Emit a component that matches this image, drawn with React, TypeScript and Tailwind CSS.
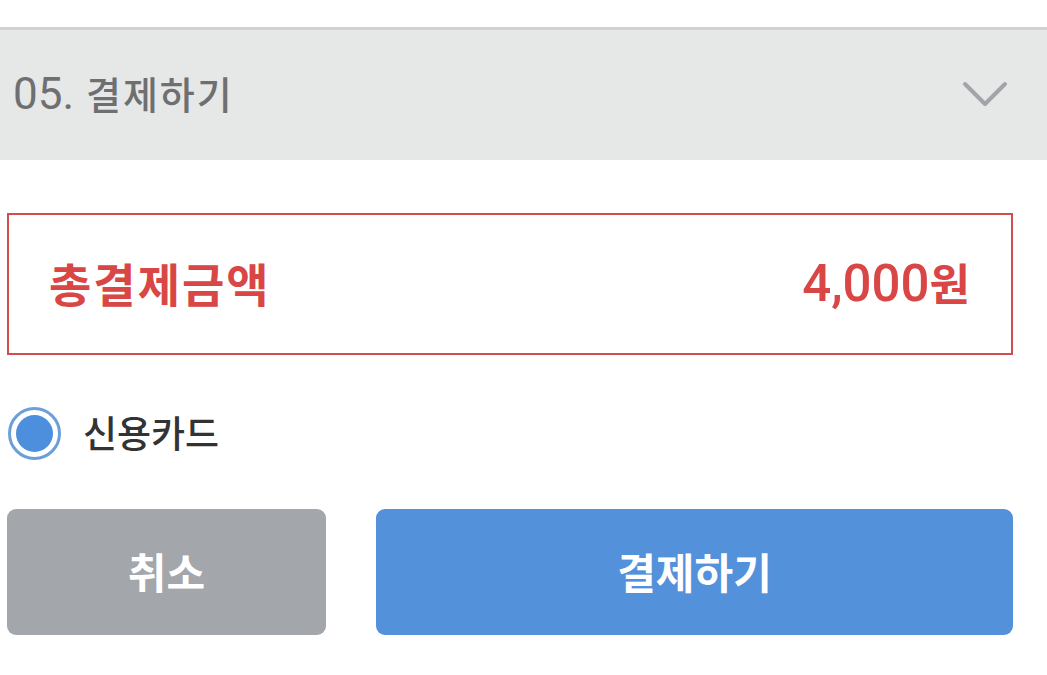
const FONT = { fontFamily: '"Noto Sans", "Noto Sans CJK KR", sans-serif' };
const DIGITS = { fontFamily: 'Roboto, "Noto Sans CJK KR", sans-serif' };

function Chevron() {
  return (
    <svg width="46" height="30" viewBox="0 0 46 30" fill="none" aria-hidden>
      <polyline
        points="3,4 23,24 43,4"
        stroke="#a2a5a8"
        strokeWidth="4"
        strokeLinecap="round"
        strokeLinejoin="round"
      />
    </svg>
  );
}

export default function App() {
  return (
    <div className="min-h-[675px] w-[1047px] bg-white" style={FONT}>
      <div className="h-[27px]" />
      {/* section header */}
      <div className="flex h-[133px] items-center justify-between border-t-[3px] border-[#d0d1d1] bg-[#e6e7e7] pl-[13px] pr-[39px]">
        <span className="pb-[3px] text-[38px] font-medium tracking-[2px] text-[#6e6f71]">
          <span className="text-[44px] font-normal tracking-normal" style={DIGITS}>
            05.
          </span>{" "}
          결제하기
        </span>
        <Chevron />
      </div>

      <div className="flex flex-col px-[7px] pr-[34px]">
        {/* total */}
        <div className="mt-[53px] flex h-[142px] items-center justify-between border-2 border-[#d24e4e] pl-[40px] pr-[41px] text-[#d94646]">
          <span className="text-[46px] font-bold tracking-[2px]">총결제금액</span>
          <span className="text-[44px] font-bold">
            <span className="text-[51px] font-medium" style={DIGITS}>
              4,000
            </span>
            원
          </span>
        </div>

        {/* payment method */}
        <label className="mt-[52px] flex h-[53px] items-center gap-[22px] pl-[1px]">
          <span className="flex h-[53px] w-[53px] items-center justify-center rounded-full border-[3px] border-[#6c9fd9] bg-white">
            <span className="h-[37px] w-[37px] rounded-full bg-[#4d8edd]" />
          </span>
          <span className="text-[37px] font-medium text-[#333333]">신용카드</span>
        </label>

        {/* actions */}
        <div className="mt-[49px] flex gap-[50px]">
          <button
            type="button"
            className="flex h-[126px] w-[319px] items-center justify-center rounded-[9px] bg-[#a3a6aa] text-[42px] font-bold text-white"
          >
            취소
          </button>
          <button
            type="button"
            className="flex h-[126px] flex-1 items-center justify-center rounded-[9px] bg-[#5391da] text-[42px] font-bold text-white"
          >
            결제하기
          </button>
        </div>
      </div>
    </div>
  );
}
